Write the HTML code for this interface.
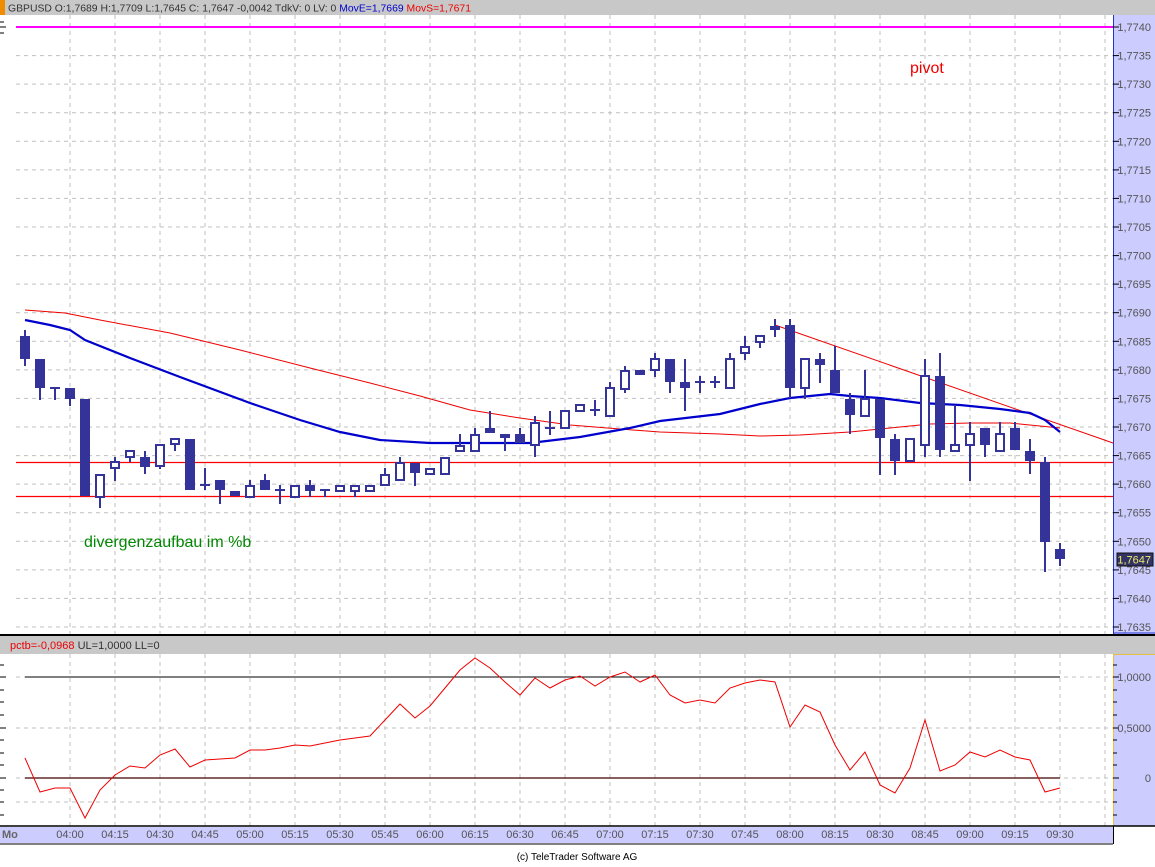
<!DOCTYPE html>
<html><head><meta charset="utf-8"><style>
html,body{margin:0;padding:0;background:#fff;}
body{width:1155px;height:862px;overflow:hidden;font-family:"Liberation Sans",Arial,sans-serif;}
</style></head><body>
<svg width="1155" height="862" viewBox="0 0 1155 862" xmlns="http://www.w3.org/2000/svg" font-family="Liberation Sans, Arial, sans-serif">
<rect x="0" y="0" width="1155" height="15" fill="#c8c8c8"/>
<rect x="0" y="0" width="5" height="15" fill="#f08c00"/>
<text x="8" y="11.5" font-size="10.5" fill="#333" textLength="463" lengthAdjust="spacingAndGlyphs"><tspan>GBPUSD O:1,7689 H:1,7709 L:1,7645 C: 1,7647 -0,0042 TdkV: 0 LV: 0 </tspan><tspan fill="#0000cc">MovE=1,7669 </tspan><tspan fill="#ee0000">MovS=1,7671</tspan></text>
<rect x="1113" y="15" width="42" height="619" fill="#ccccff"/>
<line x1="1113.5" y1="15" x2="1113.5" y2="634" stroke="#2233cc" stroke-width="1"/>
<line x1="1113" y1="633" x2="1155" y2="633" stroke="#2233cc" stroke-width="1"/>
<g stroke="#c0c0c0" stroke-width="1" stroke-dasharray="4,4">
<line x1="16" y1="27" x2="1113" y2="27"/><line x1="16" y1="55.6" x2="1113" y2="55.6"/><line x1="16" y1="84.1" x2="1113" y2="84.1"/><line x1="16" y1="112.7" x2="1113" y2="112.7"/><line x1="16" y1="141.3" x2="1113" y2="141.3"/><line x1="16" y1="169.9" x2="1113" y2="169.9"/><line x1="16" y1="198.4" x2="1113" y2="198.4"/><line x1="16" y1="227" x2="1113" y2="227"/><line x1="16" y1="255.6" x2="1113" y2="255.6"/><line x1="16" y1="284.1" x2="1113" y2="284.1"/><line x1="16" y1="312.7" x2="1113" y2="312.7"/><line x1="16" y1="341.3" x2="1113" y2="341.3"/><line x1="16" y1="369.9" x2="1113" y2="369.9"/><line x1="16" y1="398.4" x2="1113" y2="398.4"/><line x1="16" y1="427" x2="1113" y2="427"/><line x1="16" y1="455.6" x2="1113" y2="455.6"/><line x1="16" y1="484.1" x2="1113" y2="484.1"/><line x1="16" y1="512.7" x2="1113" y2="512.7"/><line x1="16" y1="541.3" x2="1113" y2="541.3"/><line x1="16" y1="569.9" x2="1113" y2="569.9"/><line x1="16" y1="598.4" x2="1113" y2="598.4"/><line x1="16" y1="627" x2="1113" y2="627"/>
<line x1="70" y1="15" x2="70" y2="634"/><line x1="115" y1="15" x2="115" y2="634"/><line x1="160" y1="15" x2="160" y2="634"/><line x1="205" y1="15" x2="205" y2="634"/><line x1="250" y1="15" x2="250" y2="634"/><line x1="295" y1="15" x2="295" y2="634"/><line x1="340" y1="15" x2="340" y2="634"/><line x1="385" y1="15" x2="385" y2="634"/><line x1="430" y1="15" x2="430" y2="634"/><line x1="475" y1="15" x2="475" y2="634"/><line x1="520" y1="15" x2="520" y2="634"/><line x1="565" y1="15" x2="565" y2="634"/><line x1="610" y1="15" x2="610" y2="634"/><line x1="655" y1="15" x2="655" y2="634"/><line x1="700" y1="15" x2="700" y2="634"/><line x1="745" y1="15" x2="745" y2="634"/><line x1="790" y1="15" x2="790" y2="634"/><line x1="835" y1="15" x2="835" y2="634"/><line x1="880" y1="15" x2="880" y2="634"/><line x1="925" y1="15" x2="925" y2="634"/><line x1="970" y1="15" x2="970" y2="634"/><line x1="1015" y1="15" x2="1015" y2="634"/><line x1="1060" y1="15" x2="1060" y2="634"/><line x1="1105" y1="15" x2="1105" y2="634"/>
</g>
<g stroke="#000" stroke-width="1">
<line x1="0" y1="22" x2="4" y2="22"/><line x1="0" y1="27" x2="6" y2="27"/><line x1="0" y1="33" x2="4" y2="33"/>
</g>
<line x1="16" y1="27" x2="1113" y2="27" stroke="#ff00ff" stroke-width="2"/>
<line x1="16" y1="462.5" x2="1113" y2="462.5" stroke="#ff0000" stroke-width="1.2"/>
<line x1="16" y1="496.5" x2="1113" y2="496.5" stroke="#ff0000" stroke-width="1.2"/>
<polyline fill="none" stroke="#ee0000" stroke-width="1" points="25,310 65,313 100,320 170,333 240,350 310,368 370,383 420,396 470,410 520,418 570,425 620,429 660,432 720,434 760,436 800,435 850,432 890,428 930,424 970,423 1010,423 1060,428"/>
<line x1="775" y1="325" x2="1113" y2="443" stroke="#ee0000" stroke-width="1"/>
<polyline fill="none" stroke="#0000cc" stroke-width="2.2" points="25,320 50,325 70,330 85,340 130,358 180,377 250,403 300,420 340,432 380,440 430,443 480,443 530,443 580,437 630,428 660,421 720,414 760,404 790,398 830,394 850,396 880,398 920,403 960,405 1000,409 1030,413 1045,420 1060,432"/>
<g stroke="#333399" stroke-width="2" fill="#333399">
<line x1="25" y1="330" x2="25" y2="366"/><rect x="20" y="336" width="10" height="23" stroke="none"/>
<line x1="40" y1="359" x2="40" y2="400"/><rect x="35" y="359" width="10" height="29" stroke="none"/>
<line x1="55" y1="388" x2="55" y2="400"/><line x1="50" y1="388" x2="60" y2="388"/>
<line x1="70" y1="388" x2="70" y2="406"/><rect x="65" y="388" width="10" height="11" stroke="none"/>
<rect x="80" y="399" width="10" height="97" stroke="none"/>
<line x1="100" y1="474" x2="100" y2="508"/><rect x="96" y="475" width="8" height="22" fill="#fff"/>
<line x1="115" y1="457" x2="115" y2="481"/><rect x="111" y="462" width="8" height="6" fill="#fff"/>
<line x1="130" y1="451" x2="130" y2="462"/><rect x="126" y="451" width="8" height="6" fill="#fff"/>
<line x1="145" y1="451" x2="145" y2="474"/><rect x="140" y="457" width="10" height="10" stroke="none"/>
<line x1="160" y1="445" x2="160" y2="469"/><rect x="156" y="445" width="8" height="21" fill="#fff"/>
<line x1="175" y1="438" x2="175" y2="451"/><rect x="171" y="439" width="8" height="5" fill="#fff"/>
<rect x="185" y="439" width="10" height="51" stroke="none"/>
<line x1="205" y1="468" x2="205" y2="490"/><line x1="200" y1="485" x2="210" y2="485"/>
<line x1="220" y1="480" x2="220" y2="504"/><rect x="215" y="480" width="10" height="10" stroke="none"/>
<rect x="230" y="491" width="10" height="5" stroke="none"/>
<line x1="250" y1="480" x2="250" y2="497"/><rect x="246" y="486" width="8" height="11" fill="#fff"/>
<line x1="265" y1="474" x2="265" y2="490"/><rect x="260" y="480" width="10" height="10" stroke="none"/>
<line x1="280" y1="485" x2="280" y2="504"/><line x1="275" y1="490" x2="285" y2="490"/>
<rect x="291" y="486" width="8" height="11" fill="#fff"/>
<line x1="310" y1="480" x2="310" y2="497"/><rect x="305" y="485" width="10" height="6" stroke="none"/>
<line x1="325" y1="490" x2="325" y2="497"/><line x1="320" y1="490" x2="330" y2="490"/>
<rect x="336" y="486" width="8" height="5" fill="#fff"/>
<line x1="355" y1="486" x2="355" y2="497"/><rect x="351" y="486" width="8" height="5" fill="#fff"/>
<rect x="366" y="486" width="8" height="5" fill="#fff"/>
<line x1="385" y1="468" x2="385" y2="485"/><rect x="381" y="475" width="8" height="10" fill="#fff"/>
<line x1="400" y1="457" x2="400" y2="480"/><rect x="396" y="463" width="8" height="17" fill="#fff"/>
<line x1="415" y1="463" x2="415" y2="486"/><rect x="410" y="463" width="10" height="10" stroke="none"/>
<rect x="426" y="469" width="8" height="5" fill="#fff"/>
<rect x="441" y="458" width="8" height="16" fill="#fff"/>
<line x1="460" y1="434" x2="460" y2="451"/><rect x="456" y="446" width="8" height="5" fill="#fff"/>
<line x1="475" y1="428" x2="475" y2="451"/><rect x="471" y="435" width="8" height="16" fill="#fff"/>
<line x1="490" y1="411" x2="490" y2="433"/><rect x="485" y="428" width="10" height="5" stroke="none"/>
<line x1="505" y1="434" x2="505" y2="451"/><rect x="500" y="434" width="10" height="4" stroke="none"/>
<line x1="520" y1="428" x2="520" y2="443"/><rect x="515" y="434" width="10" height="9" stroke="none"/>
<line x1="535" y1="416" x2="535" y2="457"/><rect x="531" y="423" width="8" height="22" fill="#fff"/>
<line x1="550" y1="411" x2="550" y2="435"/><line x1="545" y1="428" x2="555" y2="428"/>
<rect x="561" y="411" width="8" height="17" fill="#fff"/>
<rect x="576" y="405" width="8" height="6" fill="#fff"/>
<line x1="595" y1="400" x2="595" y2="416"/><line x1="590" y1="410" x2="600" y2="410"/>
<line x1="610" y1="382" x2="610" y2="416"/><rect x="606" y="388" width="8" height="28" fill="#fff"/>
<line x1="625" y1="366" x2="625" y2="393"/><rect x="621" y="371" width="8" height="18" fill="#fff"/>
<rect x="635" y="370" width="10" height="5" stroke="none"/>
<line x1="655" y1="353" x2="655" y2="377"/><rect x="651" y="359" width="8" height="11" fill="#fff"/>
<line x1="670" y1="359" x2="670" y2="393"/><rect x="665" y="359" width="10" height="23" stroke="none"/>
<line x1="685" y1="359" x2="685" y2="411"/><rect x="680" y="382" width="10" height="6" stroke="none"/>
<line x1="700" y1="376" x2="700" y2="393"/><line x1="695" y1="382" x2="705" y2="382"/>
<line x1="715" y1="376" x2="715" y2="388"/><line x1="710" y1="382" x2="720" y2="382"/>
<line x1="730" y1="353" x2="730" y2="388"/><rect x="726" y="359" width="8" height="29" fill="#fff"/>
<line x1="745" y1="336" x2="745" y2="360"/><rect x="741" y="347" width="8" height="6" fill="#fff"/>
<line x1="760" y1="336" x2="760" y2="348"/><rect x="756" y="336" width="8" height="6" fill="#fff"/>
<line x1="775" y1="319" x2="775" y2="337"/><rect x="770" y="326" width="10" height="4" stroke="none"/>
<line x1="790" y1="319" x2="790" y2="398"/><rect x="785" y="325" width="10" height="63" stroke="none"/>
<line x1="805" y1="388" x2="805" y2="399"/><rect x="801" y="359" width="8" height="29" fill="#fff"/>
<line x1="820" y1="353" x2="820" y2="383"/><rect x="815" y="359" width="10" height="6" stroke="none"/>
<line x1="835" y1="346" x2="835" y2="393"/><rect x="830" y="370" width="10" height="23" stroke="none"/>
<line x1="850" y1="393" x2="850" y2="434"/><rect x="845" y="399" width="10" height="16" stroke="none"/>
<line x1="865" y1="370" x2="865" y2="416"/><rect x="861" y="399" width="8" height="17" fill="#fff"/>
<line x1="880" y1="399" x2="880" y2="475"/><rect x="875" y="399" width="10" height="39" stroke="none"/>
<line x1="895" y1="434" x2="895" y2="475"/><rect x="890" y="439" width="10" height="22" stroke="none"/>
<rect x="906" y="439" width="8" height="22" fill="#fff"/>
<line x1="925" y1="359" x2="925" y2="457"/><rect x="921" y="376" width="8" height="69" fill="#fff"/>
<line x1="940" y1="353" x2="940" y2="457"/><rect x="935" y="376" width="10" height="74" stroke="none"/>
<line x1="955" y1="405" x2="955" y2="451"/><rect x="951" y="445" width="8" height="6" fill="#fff"/>
<line x1="970" y1="422" x2="970" y2="481"/><rect x="966" y="434" width="8" height="11" fill="#fff"/>
<line x1="985" y1="428" x2="985" y2="457"/><rect x="980" y="428" width="10" height="17" stroke="none"/>
<line x1="1000" y1="422" x2="1000" y2="451"/><rect x="996" y="434" width="8" height="17" fill="#fff"/>
<line x1="1015" y1="422" x2="1015" y2="450"/><rect x="1010" y="428" width="10" height="22" stroke="none"/>
<line x1="1030" y1="439" x2="1030" y2="474"/><rect x="1025" y="451" width="10" height="10" stroke="none"/>
<line x1="1045" y1="457" x2="1045" y2="572"/><rect x="1040" y="462" width="10" height="80" stroke="none"/>
<line x1="1060" y1="543" x2="1060" y2="566"/><rect x="1055" y="549" width="10" height="10" stroke="none"/>
</g>
<text x="910" y="73" font-size="16" fill="#ee0000">pivot</text>
<text x="84" y="547" font-size="16" fill="#008800">divergenzaufbau im %b</text>
<g font-size="11" fill="#555" text-anchor="end">
<text x="1151" y="31">1,7740</text><text x="1151" y="59.6">1,7735</text><text x="1151" y="88.1">1,7730</text><text x="1151" y="116.7">1,7725</text><text x="1151" y="145.3">1,7720</text><text x="1151" y="173.9">1,7715</text><text x="1151" y="202.4">1,7710</text><text x="1151" y="231">1,7705</text><text x="1151" y="259.6">1,7700</text><text x="1151" y="288.1">1,7695</text><text x="1151" y="316.7">1,7690</text><text x="1151" y="345.3">1,7685</text><text x="1151" y="373.9">1,7680</text><text x="1151" y="402.4">1,7675</text><text x="1151" y="431">1,7670</text><text x="1151" y="459.6">1,7665</text><text x="1151" y="488.1">1,7660</text><text x="1151" y="516.7">1,7655</text><text x="1151" y="545.3">1,7650</text><text x="1151" y="573.9">1,7645</text><text x="1151" y="602.4">1,7640</text><text x="1151" y="631">1,7635</text>
</g>
<g stroke="#000" stroke-width="1">
<line x1="1113" y1="27" x2="1119" y2="27"/><line x1="1113" y1="55.6" x2="1119" y2="55.6"/><line x1="1113" y1="84.1" x2="1119" y2="84.1"/><line x1="1113" y1="112.7" x2="1119" y2="112.7"/><line x1="1113" y1="141.3" x2="1119" y2="141.3"/><line x1="1113" y1="169.9" x2="1119" y2="169.9"/><line x1="1113" y1="198.4" x2="1119" y2="198.4"/><line x1="1113" y1="227" x2="1119" y2="227"/><line x1="1113" y1="255.6" x2="1119" y2="255.6"/><line x1="1113" y1="284.1" x2="1119" y2="284.1"/><line x1="1113" y1="312.7" x2="1119" y2="312.7"/><line x1="1113" y1="341.3" x2="1119" y2="341.3"/><line x1="1113" y1="369.9" x2="1119" y2="369.9"/><line x1="1113" y1="398.4" x2="1119" y2="398.4"/><line x1="1113" y1="427" x2="1119" y2="427"/><line x1="1113" y1="455.6" x2="1119" y2="455.6"/><line x1="1113" y1="484.1" x2="1119" y2="484.1"/><line x1="1113" y1="512.7" x2="1119" y2="512.7"/><line x1="1113" y1="541.3" x2="1119" y2="541.3"/><line x1="1113" y1="569.9" x2="1119" y2="569.9"/><line x1="1113" y1="598.4" x2="1119" y2="598.4"/><line x1="1113" y1="627" x2="1119" y2="627"/>
</g>
<rect x="1117" y="553" width="36" height="13" fill="#333366" stroke="#111" stroke-width="1"/>
<text x="1151" y="563.5" font-size="11" fill="#eeee66" text-anchor="end">1,7647</text>
<line x1="0" y1="635" x2="1155" y2="635" stroke="#000" stroke-width="2"/>
<rect x="0" y="636" width="1155" height="18" fill="#c8c8c8"/>
<text x="10" y="649" font-size="11" fill="#ee0000">pctb=-0,0968 <tspan fill="#333">UL=1,0000 LL=0</tspan></text>
<rect x="1113" y="654" width="42" height="172" fill="#ccccff"/>
<line x1="1113.5" y1="654" x2="1113.5" y2="826" stroke="#e8c040" stroke-width="1"/>
<line x1="1113" y1="654.5" x2="1155" y2="654.5" stroke="#e8c040" stroke-width="1"/>
<g stroke="#c0c0c0" stroke-width="1" stroke-dasharray="4,4">
<line x1="16" y1="677" x2="1113" y2="677"/><line x1="16" y1="728" x2="1113" y2="728"/><line x1="16" y1="778" x2="1113" y2="778"/><line x1="16" y1="802" x2="1113" y2="802"/>
<line x1="70" y1="654" x2="70" y2="826"/><line x1="115" y1="654" x2="115" y2="826"/><line x1="160" y1="654" x2="160" y2="826"/><line x1="205" y1="654" x2="205" y2="826"/><line x1="250" y1="654" x2="250" y2="826"/><line x1="295" y1="654" x2="295" y2="826"/><line x1="340" y1="654" x2="340" y2="826"/><line x1="385" y1="654" x2="385" y2="826"/><line x1="430" y1="654" x2="430" y2="826"/><line x1="475" y1="654" x2="475" y2="826"/><line x1="520" y1="654" x2="520" y2="826"/><line x1="565" y1="654" x2="565" y2="826"/><line x1="610" y1="654" x2="610" y2="826"/><line x1="655" y1="654" x2="655" y2="826"/><line x1="700" y1="654" x2="700" y2="826"/><line x1="745" y1="654" x2="745" y2="826"/><line x1="790" y1="654" x2="790" y2="826"/><line x1="835" y1="654" x2="835" y2="826"/><line x1="880" y1="654" x2="880" y2="826"/><line x1="925" y1="654" x2="925" y2="826"/><line x1="970" y1="654" x2="970" y2="826"/><line x1="1015" y1="654" x2="1015" y2="826"/><line x1="1060" y1="654" x2="1060" y2="826"/><line x1="1105" y1="654" x2="1105" y2="826"/>
</g>
<g stroke="#000" stroke-width="1">
<line x1="0" y1="665" x2="4" y2="665"/><line x1="0" y1="677" x2="6" y2="677"/><line x1="0" y1="690" x2="4" y2="690"/><line x1="0" y1="702" x2="4" y2="702"/><line x1="0" y1="715" x2="4" y2="715"/><line x1="0" y1="728" x2="6" y2="728"/><line x1="0" y1="740" x2="4" y2="740"/><line x1="0" y1="753" x2="4" y2="753"/><line x1="0" y1="765" x2="4" y2="765"/><line x1="0" y1="778" x2="6" y2="778"/><line x1="0" y1="790" x2="4" y2="790"/><line x1="0" y1="802" x2="4" y2="802"/><line x1="0" y1="815" x2="4" y2="815"/>
<line x1="1113" y1="665" x2="1117" y2="665"/><line x1="1113" y1="677" x2="1119" y2="677"/><line x1="1113" y1="690" x2="1117" y2="690"/><line x1="1113" y1="702" x2="1117" y2="702"/><line x1="1113" y1="715" x2="1117" y2="715"/><line x1="1113" y1="728" x2="1119" y2="728"/><line x1="1113" y1="740" x2="1117" y2="740"/><line x1="1113" y1="753" x2="1117" y2="753"/><line x1="1113" y1="765" x2="1117" y2="765"/><line x1="1113" y1="778" x2="1119" y2="778"/><line x1="1113" y1="790" x2="1117" y2="790"/><line x1="1113" y1="802" x2="1117" y2="802"/><line x1="1113" y1="815" x2="1117" y2="815"/>
</g>
<line x1="25" y1="677" x2="1060" y2="677" stroke="#000" stroke-width="1"/>
<line x1="25" y1="778" x2="1060" y2="778" stroke="#400000" stroke-width="1.3"/>
<polyline fill="none" stroke="#ee0000" stroke-width="1" points="25,758 40,792 55,788 70,788 85,818 100,790 115,775 130,766 145,768 160,755 175,749 190,767 205,760 220,759 235,758 250,750 265,750 280,748 295,745 310,746 325,743 340,740 355,738 370,736 385,720 400,704 415,718 430,706 445,688 460,670 475,658 490,668 505,682 520,695 535,678 550,688 565,680 580,676 595,686 610,677 625,672 640,682 655,675 670,695 685,703 700,700 715,703 730,688 745,683 760,680 775,682 790,727 805,705 820,712 835,745 850,770 865,752 880,785 895,793 910,768 925,720 940,771 955,765 970,752 985,757 1000,750 1015,757 1030,760 1045,792 1060,788"/>
<g font-size="11" fill="#555" text-anchor="end">
<text x="1151" y="681">1,0000</text><text x="1151" y="732">0,5000</text><text x="1151" y="782">0</text>
</g>
<line x1="0" y1="826" x2="1155" y2="826" stroke="#000" stroke-width="1.5"/>
<rect x="0" y="827" width="1113" height="16" fill="#ccccff"/>
<line x1="0" y1="844" x2="1113" y2="844" stroke="#000" stroke-width="1"/>
<line x1="1113.5" y1="826" x2="1113.5" y2="844" stroke="#000" stroke-width="1"/>
<text x="2" y="838" font-size="11" font-weight="bold" fill="#666">Mo</text>
<g font-size="11" fill="#555" text-anchor="middle">
<text x="70" y="838">04:00</text><text x="115" y="838">04:15</text><text x="160" y="838">04:30</text><text x="205" y="838">04:45</text><text x="250" y="838">05:00</text><text x="295" y="838">05:15</text><text x="340" y="838">05:30</text><text x="385" y="838">05:45</text><text x="430" y="838">06:00</text><text x="475" y="838">06:15</text><text x="520" y="838">06:30</text><text x="565" y="838">06:45</text><text x="610" y="838">07:00</text><text x="655" y="838">07:15</text><text x="700" y="838">07:30</text><text x="745" y="838">07:45</text><text x="790" y="838">08:00</text><text x="835" y="838">08:15</text><text x="880" y="838">08:30</text><text x="925" y="838">08:45</text><text x="970" y="838">09:00</text><text x="1015" y="838">09:15</text><text x="1060" y="838">09:30</text>
</g>
<text x="577" y="860" font-size="10" fill="#000" text-anchor="middle">(c) TeleTrader Software AG</text>
</svg>
</body></html>
